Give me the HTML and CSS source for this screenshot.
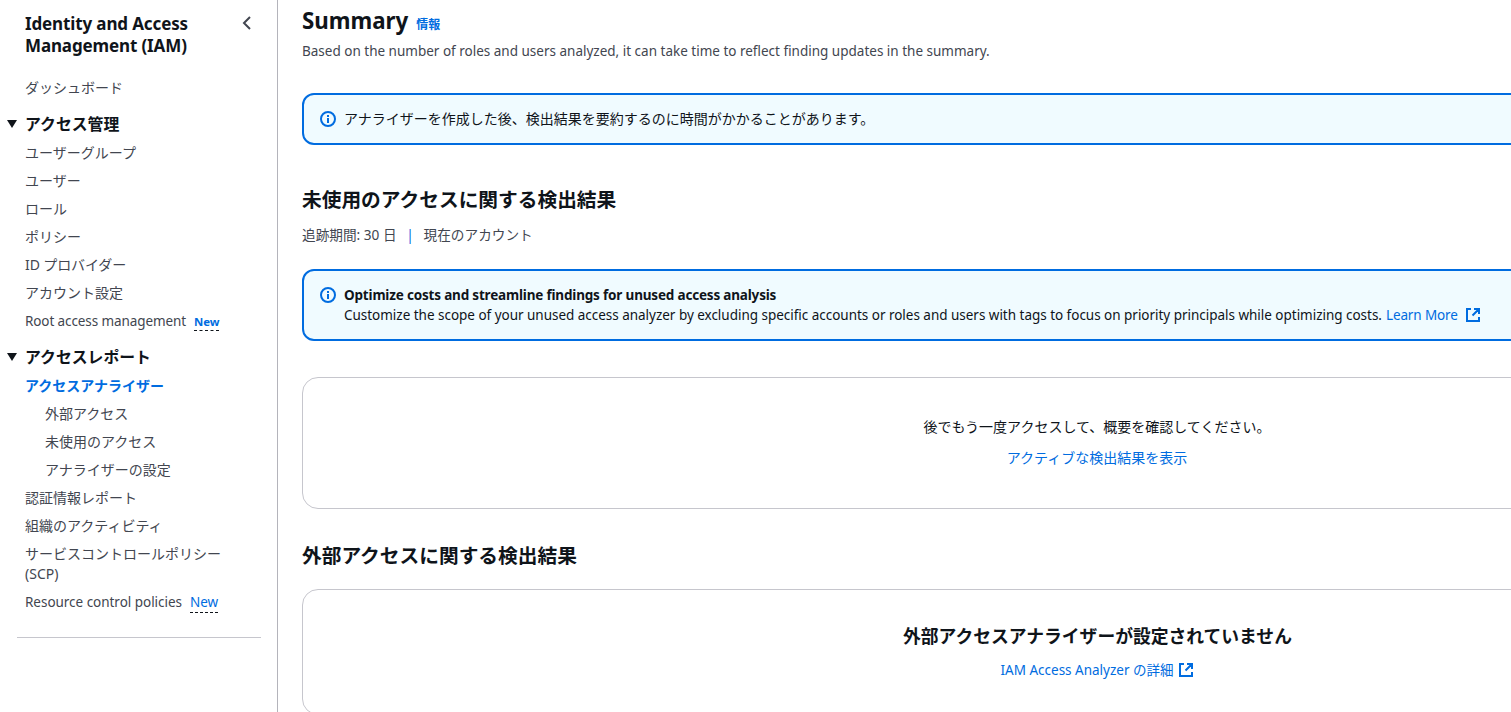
FILE: index.html
```html
<!DOCTYPE html>
<html lang="ja">
<head>
<meta charset="utf-8">
<title>IAM Access Analyzer</title>
<link rel="stylesheet" href="styles.css">
</head>
<body>
<svg class="defs" width="0" height="0" aria-hidden="true">
  <symbol id="info" viewBox="0 0 16 16"><circle cx="8" cy="8" r="7" fill="none" stroke="currentColor" stroke-width="2"/><path d="M7 7h2v5H7zM7 4h2v2H7z" fill="currentColor"/></symbol>
  <symbol id="external" viewBox="0 0 14 14"><path d="M5 1H1v12h12V9M8 1h5v5M12.500 1.500L6.500 7.500" fill="none" stroke="currentColor" stroke-width="2"/></symbol>
</svg>
<div class="layout">
  <nav class="sidebar">
    <header class="sidebar-head">
      <h2 class="service">Identity and Access<br>Management (IAM)</h2>
      <svg class="collapse" viewBox="0 0 16 16" width="16" height="16"><path d="M11 2L5 8l6 6" fill="none" stroke="#424650" stroke-width="2"/></svg>
    </header>
    <a class="item first">ダッシュボード</a>
    <h3 class="section"><i class="caret"></i>アクセス管理</h3>
    <a class="item">ユーザーグループ</a>
    <a class="item">ユーザー</a>
    <a class="item">ロール</a>
    <a class="item">ポリシー</a>
    <a class="item provider">ID プロバイダー</a>
    <a class="item">アカウント設定</a>
    <a class="item latin"><span class="root">Root access management</span><span class="new new-bold">New</span></a>
    <h3 class="section second"><i class="caret"></i>アクセスレポート</h3>
    <a class="item active">アクセスアナライザー</a>
    <a class="item sub">外部アクセス</a>
    <a class="item sub">未使用のアクセス</a>
    <a class="item sub">アナライザーの設定</a>
    <a class="item">認証情報レポート</a>
    <a class="item">組織のアクティビティ</a>
    <a class="item">サービスコントロールポリシー<span class="scp">(SCP)</span></a>
    <a class="item latin"><span class="rcp">Resource control policies</span><span class="new">New</span></a>
    <hr class="rule">
  </nav>
  <main class="main">
    <div class="title-row"><h1 class="title">Summary</h1><a class="info-link">情報</a></div>
    <p class="desc latin">Based on the number of roles and users analyzed, it can take time to reflect finding updates in the summary.</p>
    <div class="alert alert-small"><svg class="alert-icon"><use href="#info"/></svg><div class="alert-text">アナライザーを作成した後、検出結果を要約するのに時間がかかることがあります。</div></div>
    <h2 class="heading">未使用のアクセスに関する検出結果</h2>
    <p class="meta"><span>追跡期間: 30 日</span><span class="bar">|</span><span>現在のアカウント</span></p>
    <div class="alert alert-large"><svg class="alert-icon"><use href="#info"/></svg>
      <div class="latin"><b class="alert-title">Optimize costs and streamline findings for unused access analysis</b><br><span class="alert-copy">Customize the scope of your unused access analyzer by excluding specific accounts or roles and users with tags to focus on priority principals while optimizing costs.</span><a class="learn">Learn More</a><svg class="ext"><use href="#external"/></svg></div>
    </div>
    <section class="card"><p class="card-text">後でもう一度アクセスして、概要を確認してください。</p><a class="link">アクティブな検出結果を表示</a></section>
    <h2 class="heading heading-external">外部アクセスに関する検出結果</h2>
    <section class="card card-external"><h3 class="card-title">外部アクセスアナライザーが設定されていません</h3><a class="link detail">IAM Access Analyzer の詳細<svg class="ext"><use href="#external"/></svg></a></section>
  </main>
</div>
</body>
</html>
```
FILE: styles.css
```css
* { box-sizing: border-box; }
body { margin: 0; height: 712px; overflow: hidden; background: #fff; color: #0f141a; font: 14px/20px "Noto Sans", "Noto Sans CJK JP", sans-serif; }
h1, h2, h3, p { margin: 0; }
.defs { display: block; }
.layout { display: flex; height: 712px; overflow: hidden; }
.sidebar { flex: none; width: 278px; border-right: 1px solid #b4b4bb; color: #424650; }
.sidebar-head { display: flex; justify-content: space-between; padding: 13px 22px 0 25px; color: #0f141a; }
.service { font-size: 17px; line-height: 22px; letter-spacing: -.13px; white-space: nowrap; }
.collapse { margin-top: 2px; }
.item { display: block; margin: 0 0 8px 25px; padding-bottom: 1px; line-height: 19px; white-space: nowrap; }
.first { margin-top: 21px; margin-bottom: 15px; }
.provider { letter-spacing: -.1px; }
.latin { font-size: 13.5px; line-height: 20px; }
.item.latin { height: 20px; padding-bottom: 0; }
.root { letter-spacing: -.1px; }
.rcp { letter-spacing: -.03px; }
.scp { display: block; margin-top: 1px; }
.section { display: flex; align-items: center; padding-left: 7px; height: 22px; margin-bottom: 8px; font-size: 15.85px; line-height: 22px; color: #0f141a; }
.second { margin-top: 15px; }
.caret { width: 10px; height: 8px; margin-right: 8px; background: #0f141a; clip-path: polygon(0 0, 100% 0, 50% 100%); }
.active { color: #006ce0; font-weight: 700; }
.sub { margin-left: 45px; }
.new { display: inline-block; height: 21px; margin-left: 8px; color: #006ce0; border-bottom: 1px dashed #0f141a; }
.new-bold { height: 19px; font-size: 11.4px; font-weight: 700; letter-spacing: -.1px; }
.rule { width: 244px; height: 1px; margin: 25px 0 0 17px; border: 0; background: #c6c6cd; }
.main { flex: none; width: 1615px; padding: 7px 0 0 24px; }
.title-row { display: flex; align-items: baseline; height: 30px; }
.title { font-size: 22.3px; line-height: 28px; }
.info-link { margin-left: 8px; color: #006ce0; font-size: 12px; font-weight: 700; }
.desc { margin-top: 4px; color: #424650; }
.alert { display: flex; border: 2px solid #006ce0; border-radius: 12px; background: #f0fbff; white-space: nowrap; }
.alert-icon { flex: none; width: 16px; height: 16px; margin: 2px 8px 0 0; color: #006ce0; }
.alert-text { line-height: 19px; }
.alert-title { letter-spacing: -.18px; }
.alert-copy { letter-spacing: -.023px; }
.alert-small { height: 52px; margin-top: 32px; padding: 14px 16px; }
.alert-large { height: 72px; margin-top: 24px; padding: 14px 16px; }
.heading { margin-top: 43px; font-size: 19.72px; line-height: 24px; }
.meta { display: flex; margin-top: 13px; color: #424650; font-size: 13.65px; line-height: 19px; height: 20px; }
.bar { width: 27px; text-align: center; color: #006ce0; }
.learn { margin-left: 4px; color: #006ce0; letter-spacing: -.12px; }
.ext { width: 14px; height: 14px; margin-left: 8px; color: #006ce0; vertical-align: -2px; }
.card { display: flex; flex-direction: column; align-items: center; height: 132px; margin-top: 36px; border: 1px solid #c6c6cd; border-radius: 16px; padding-top: 39px; line-height: 19px; }
.link { margin-top: 12px; color: #006ce0; }
.heading-external { margin-top: 35px; }
.card-external { margin-top: 21px; height: 126px; padding-top: 35px; }
.card-title { font-size: 17.8px; line-height: 22px; }
.card-text, .link { position: relative; left: -.5px; }
.detail { left: -1px; margin-top: 14px; font-size: 13.5px; }
.detail .ext { margin-left: 5px; }
```
